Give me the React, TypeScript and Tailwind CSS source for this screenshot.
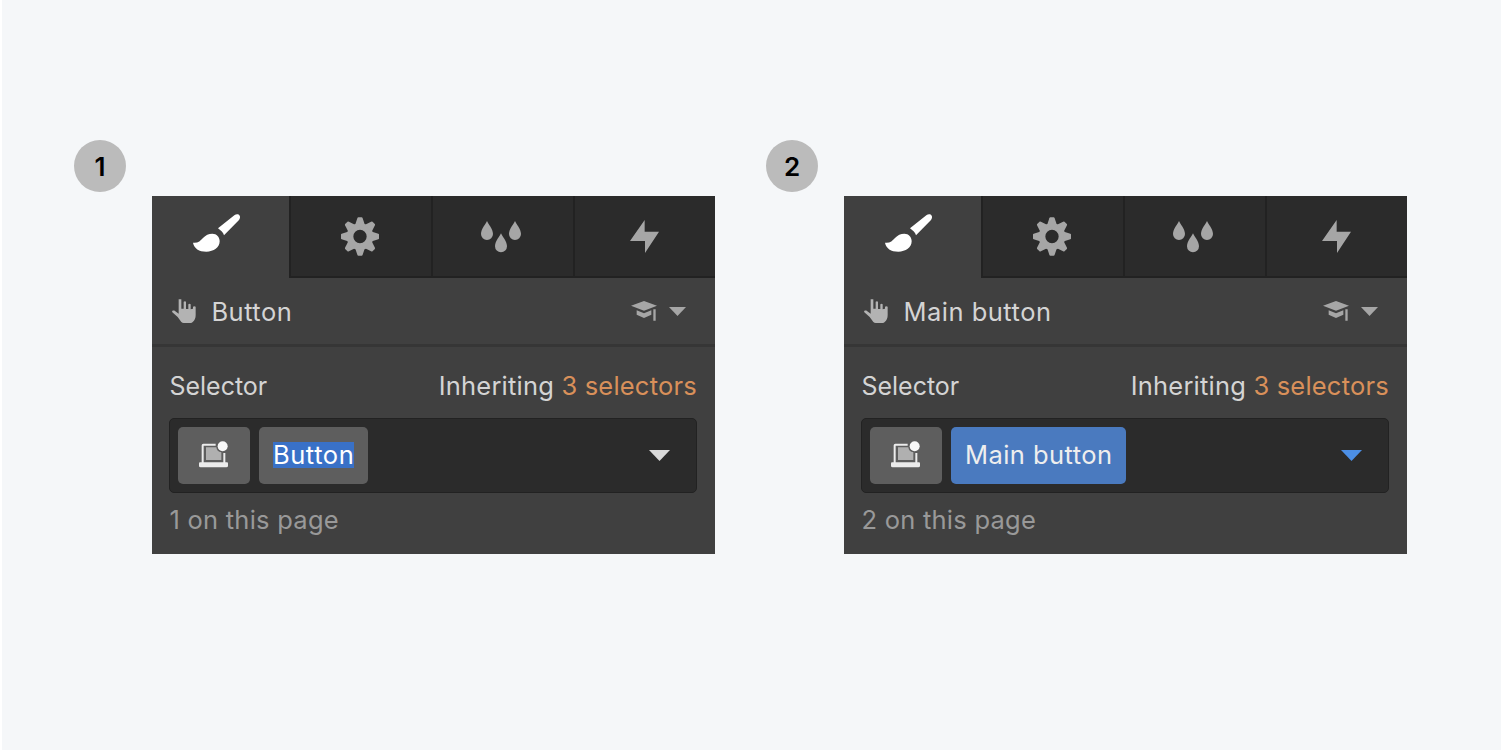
import type { ReactNode } from 'react';

interface PanelProps {
    step: number;
    name: string;
    count: number;
    editing?: boolean;
}

const BrushIcon = () => (
    <svg width="47" height="38" viewBox="0 0 141 114" fill="currentColor">
        <path d="M0 86C14 88 22 81 30 72C38 63 47 59 58 59C71 59 80 69 80 82C80 101 62 113 40 113C18 113 3 103 0 86Z" />
        <path d="M75 43L124 4C130 -1 137 0 140 5C142 9 141 14 138 18L93 64C91 56 84 50 75 43Z" />
    </svg>
);

const GearIcon = () => (
    <svg width="38" height="39" viewBox="-57 -58.5 114 117" fill="currentColor">
        <circle r="30" fill="none" stroke="currentColor" strokeWidth="20" />
        {[0, 45, 90, 135, 180, 225, 270, 315].map((angle) => (
            <path key={angle} d="M-15 -34L-8 -55Q-7 -58 -5 -58H5Q7 -58 8 -55L15 -34Z" transform={`rotate(${angle})`} />
        ))}
    </svg>
);

const drop = 'c4 10 18 24 18 39a18 18 0 0 1-36 0c0-15 14-29 18-39z';

const DropsIcon = () => (
    <svg width="40" height="32" viewBox="0 0 120 96" fill="currentColor">
        <path d={`M18 0${drop}M60 37${drop}M102 0${drop}`} />
    </svg>
);

const BoltIcon = () => (
    <svg width="29" height="33" viewBox="0 0 87 99" fill="currentColor">
        <path d="M44 0V35H87L45 99V63H0Z" />
    </svg>
);

const HandIcon = () => (
    <svg width="24" height="24" viewBox="0 0 72 72" fill="currentColor">
        <path d="M20 1H28V29H35V8Q39 5 42 8V30H49V16Q53 13 56 16V31L63 29V23Q67 20 71 23V48C71 58 68 64 62 69Q60 72 56 72H35Q31 72 28 69L17 54L1 40C-2 35 5 33 9 36L20 44Z" />
    </svg>
);

const CapIcon = () => (
    <svg width="26" height="20" viewBox="0 0 78 60" fill="currentColor">
        <path d="M39 0L78 14L39 29L0 14ZM17 28L39 37L61 28V41L39 51L17 41ZM67 25H74V59H67Z" />
    </svg>
);

const LaptopIcon = () => (
    <svg width="29" height="27" viewBox="0 0 87 81">
        <path d="M11 66V13Q11 11 13 11H50M76 36V66" fill="none" stroke="#ececec" strokeWidth="6" />
        <path d="M21 19H52C53 28 58 33 67 34V57H21Z" fill="#b0b0b0" />
        <path d="M3 64H84Q87 64 87 67V74Q87 79 82 79H5Q0 79 0 74V67Q0 64 3 64Z" fill="#ececec" />
        <circle cx="71" cy="16" r="15" fill="#f7f7f7" />
    </svg>
);

const Caret = ({ className }: { className: string }) => (
    <svg className={className} viewBox="0 0 20 10" preserveAspectRatio="none" fill="currentColor">
        <path d="M0 0H20L10 10Z" />
    </svg>
);

const Tab = ({ children }: { children: ReactNode }) => (
    <div className="flex flex-1 items-center justify-center border-b-2 border-l-2 border-[#222222] bg-[#2b2b2b] text-[#a6a6a6]">
        {children}
    </div>
);

function Panel({ step, name, count, editing }: PanelProps) {
    return (
        <section className="w-[641px]">
            <div className="flex size-[52px] items-center justify-center rounded-full bg-[#bbbbbb] text-[26px] font-semibold text-black">
                {step}
            </div>

            <div className="mt-1 ml-[78.400px] h-[358px] w-[562.500px] bg-[#404040] text-[25.5px] text-[#d4d4d4]">
                {/* Tabs */}
                <div className="flex h-[82px]">
                    <div className="flex w-[137px] pt-[18px] pl-[41px] text-white">
                        <BrushIcon />
                    </div>
                    <Tab>
                        <span className="pr-0.5">
                            <GearIcon />
                        </span>
                    </Tab>
                    <Tab>
                        <span className="pt-0.5 pr-1">
                            <DropsIcon />
                        </span>
                    </Tab>
                    <Tab>
                        <BoltIcon />
                    </Tab>
                </div>

                {/* Selected element */}
                <div className="flex h-[69px] items-center border-b-3 border-[#363636] pr-[28.500px] pl-[19.500px]">
                    <span className="text-[#b3b3b3]">
                        <HandIcon />
                    </span>
                    <span className="ml-[15.500px] pt-px leading-[38px] tracking-[0.5px]">{name}</span>
                    <div className="ml-auto flex items-center gap-[12.500px] text-[#a6a6a6]">
                        <CapIcon />
                        <Caret className="h-[9px] w-[17px]" />
                    </div>
                </div>

                {/* Selector */}
                <div className="pt-5 pr-[18px] pl-[17px]">
                    <div className="flex justify-between leading-[38px]">
                        <span className="text-[25px] leading-[39px]">Selector</span>
                        <span className="tracking-[0.2px]">
                            Inheriting <span className="text-[#d9905a]">3 selectors</span>
                        </span>
                    </div>
                    <div className="mt-3 flex h-[75px] items-center gap-[9px] rounded-[5px] border border-[#222222] bg-[#2b2b2b] pr-[26px] pl-2">
                        <div className="flex h-[57px] w-[72px] items-center justify-center rounded-[5px] bg-[#5e5e5e] pr-0.5 pb-0.5">
                            <LaptopIcon />
                        </div>
                        {editing ? (
                            <div className="flex h-[57px] items-center rounded-[5px] bg-[#5e5e5e] px-[13.500px] pb-0.5 text-white">
                                <span className="bg-[#3971c7] leading-[26px] tracking-[0.6px]">{name}</span>
                            </div>
                        ) : (
                            <div className="flex h-[57px] items-center rounded-[5px] bg-[#4a7abf] px-[13.500px] pb-0.5 text-[#eeeeee]">
                                <span className="leading-[26px] tracking-[0.45px]">{name}</span>
                            </div>
                        )}
                        <span className={editing ? 'ml-auto text-[#d9d9d9]' : 'ml-auto text-[#4c8fe6]'}>
                            <Caret className="h-[11px] w-[21px]" />
                        </span>
                    </div>
                    <p className="mt-[7px] leading-10 tracking-[0.25px] text-[#999999]">{count} on this page</p>
                </div>
            </div>
        </section>
    );
}

export default function App() {
    return (
        <main className="flex h-[751px] w-[1501px] gap-[51px] border-b border-l-2 border-white bg-[#f5f7f9] pt-[140px] pl-[72px] font-[Inter]">
            <Panel step={1} name="Button" count={1} editing />
            <Panel step={2} name="Main button" count={2} />
        </main>
    );
}
